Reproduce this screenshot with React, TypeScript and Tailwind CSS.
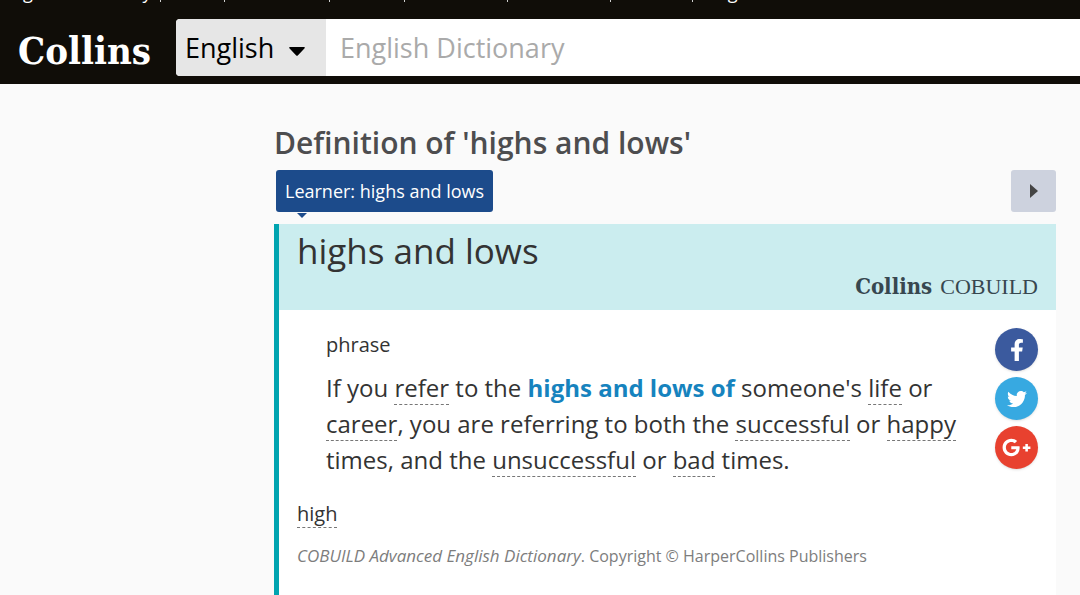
import type { ReactNode } from 'react';
import { FaFacebookF, FaTwitter, FaGooglePlusG } from 'react-icons/fa';

const NAV_ITEMS = ['English Dictionary', 'Video', 'Thesaurus', 'Games', 'Translator', 'Resources', 'Schools', 'Blog'];

const SHARE_LINKS = [
  { id: 'facebook', label: 'Share on Facebook', color: 'bg-[#3b5a9e]', icon: <FaFacebookF className="w-[22px] h-[22px]" /> },
  { id: 'twitter', label: 'Share on Twitter', color: 'bg-[#37a9e1]', icon: <FaTwitter className="w-5 h-5" /> },
  { id: 'google', label: 'Share on Google Plus', color: 'bg-[#e8412f]', icon: <FaGooglePlusG className="w-[29px] h-[29px]" /> },
];

function WordLink({ children }: { children: ReactNode }) {
  return (
    <a href="#" className="border-b border-dashed border-[#777]">
      {children}
    </a>
  );
}

function Header() {
  return (
    <header className="bg-[#100d08] text-white overflow-hidden">
      <nav className="h-[19px] flex items-end pl-[2px] whitespace-nowrap">
        <ul className="flex pb-[15px] text-[18px] leading-6">
          {NAV_ITEMS.map((item, i) => (
            <li key={item} className="flex items-start">
              {i > 0 && <span className="w-px h-[22px] mx-2 bg-white/80" />}
              <a href="#">{item}</a>
            </li>
          ))}
        </ul>
      </nav>

      <div className="flex items-stretch pb-2">
        <a
          href="#"
          className="w-[176px] shrink-0 pl-[18px] pt-2 text-[38px] leading-[48px] font-bold font-['DejaVu_Serif_Condensed','DejaVu_Serif',serif]"
        >
          Collins
        </a>
        <form className="flex flex-1 h-[57px] rounded-l-sm overflow-hidden bg-white">
          <div className="relative w-[150px] shrink-0">
            <select
              aria-label="Dictionary language"
              className="appearance-none w-full h-full pl-[9px] pt-[2px] bg-[#e6e6e6] text-black text-[27px]"
            >
              <option>English</option>
            </select>
            <svg
              viewBox="0 0 16 9"
              className="absolute right-[21px] top-[28px] w-4 h-[9px] pointer-events-none"
              aria-hidden="true"
            >
              <path d="M1 0h14q1.500 .5 .4 1.500L9 8.300q-1 1-2 0L.6 1.500Q-.5 .5 1 0z" fill="#000" />
            </svg>
          </div>
          <input
            type="text"
            aria-label="Search"
            placeholder="English Dictionary"
            className="flex-1 min-w-0 px-[14px] pt-[2px] text-[27px] text-black placeholder:text-[#aaa]"
          />
        </form>
      </div>
    </header>
  );
}

export default function App() {
  return (
    <div className="min-h-screen flex flex-col bg-[#fafafa] text-[#333] font-['Open_Sans',sans-serif]">
      <Header />

      <main className="flex-1 flex flex-col pl-[274px] pr-6 pt-10">
        <h1 className="text-[30px] leading-[38px] font-semibold text-[#4d4d4f]">Definition of 'highs and lows'</h1>

        <div className="flex justify-between pt-2 pl-[2px]">
          <a
            href="#"
            className="relative h-[42px] px-[9px] rounded-[3px] bg-[#1c4b8b] text-white text-[18px] leading-[42px]"
          >
            Learner: highs and lows
            <svg viewBox="0 0 10 5" className="absolute left-[21px] top-[43px] w-[10px] h-[5px]" aria-hidden="true">
              <path d="M0 0h10L5 5z" fill="#1c4b8b" />
            </svg>
          </a>
          <button
            type="button"
            aria-label="Next"
            className="w-[45px] h-[42px] flex items-center justify-center rounded-[3px] bg-[#cdd2de]"
          >
            <svg viewBox="0 0 8 14" className="w-2 h-[14px]" aria-hidden="true">
              <path d="M0 0l8 7-8 7z" fill="#444" />
            </svg>
          </button>
        </div>

        <article className="flex-1 mt-3 border-l-[5px] border-[#00a4b0] bg-white">
          <header className="h-[86px] flex justify-between bg-[#cbedef] pl-[18px] pr-[18px]">
            <h2 className="text-[35px] leading-[54px]">highs and lows</h2>
            <p className="self-end pb-2 flex items-baseline gap-2 text-[#37474f] leading-[30px]">
              <span className="text-[22px] font-bold font-['DejaVu_Serif_Condensed','DejaVu_Serif',serif]">Collins</span>
              <span className="text-[22px] font-['Liberation_Serif',serif]">COBUILD</span>
            </p>
          </header>

          <div className="flex pl-[18px] pr-[18px] pt-[18px]">
            <div className="flex-1">
              <div className="pl-[29px] pr-4">
                <p className="text-[20px] leading-[34px]">phrase</p>
                <p className="pt-2 text-[24px] leading-9">
                  If you <WordLink>refer</WordLink> to the{' '}
                  <strong className="font-bold text-[#1683be]">highs and lows of</strong> someone's{' '}
                  <WordLink>life</WordLink> or <WordLink>career</WordLink>, you are referring to both the{' '}
                  <WordLink>successful</WordLink> or <WordLink>happy</WordLink> times, and the{' '}
                  <WordLink>unsuccessful</WordLink> or <WordLink>bad</WordLink> times.
                </p>
              </div>
              <p className="pt-5 text-[20px] leading-[32px]">
                <WordLink>high</WordLink>
              </p>
              <p className="pt-[14px] text-[16px] leading-6 text-[#7d7d7d]">
                <cite className="text-[17px]">COBUILD Advanced English Dictionary</cite>. Copyright © HarperCollins
                Publishers
              </p>
            </div>

            <ul className="flex flex-col gap-[6px]">
              {SHARE_LINKS.map((link) => (
                <li key={link.id}>
                  <a
                    href="#"
                    aria-label={link.label}
                    className={`w-[43px] h-[43px] flex items-center justify-center rounded-full text-white shadow-sm ${link.color}`}
                  >
                    {link.icon}
                  </a>
                </li>
              ))}
            </ul>
          </div>
        </article>
      </main>
    </div>
  );
}
